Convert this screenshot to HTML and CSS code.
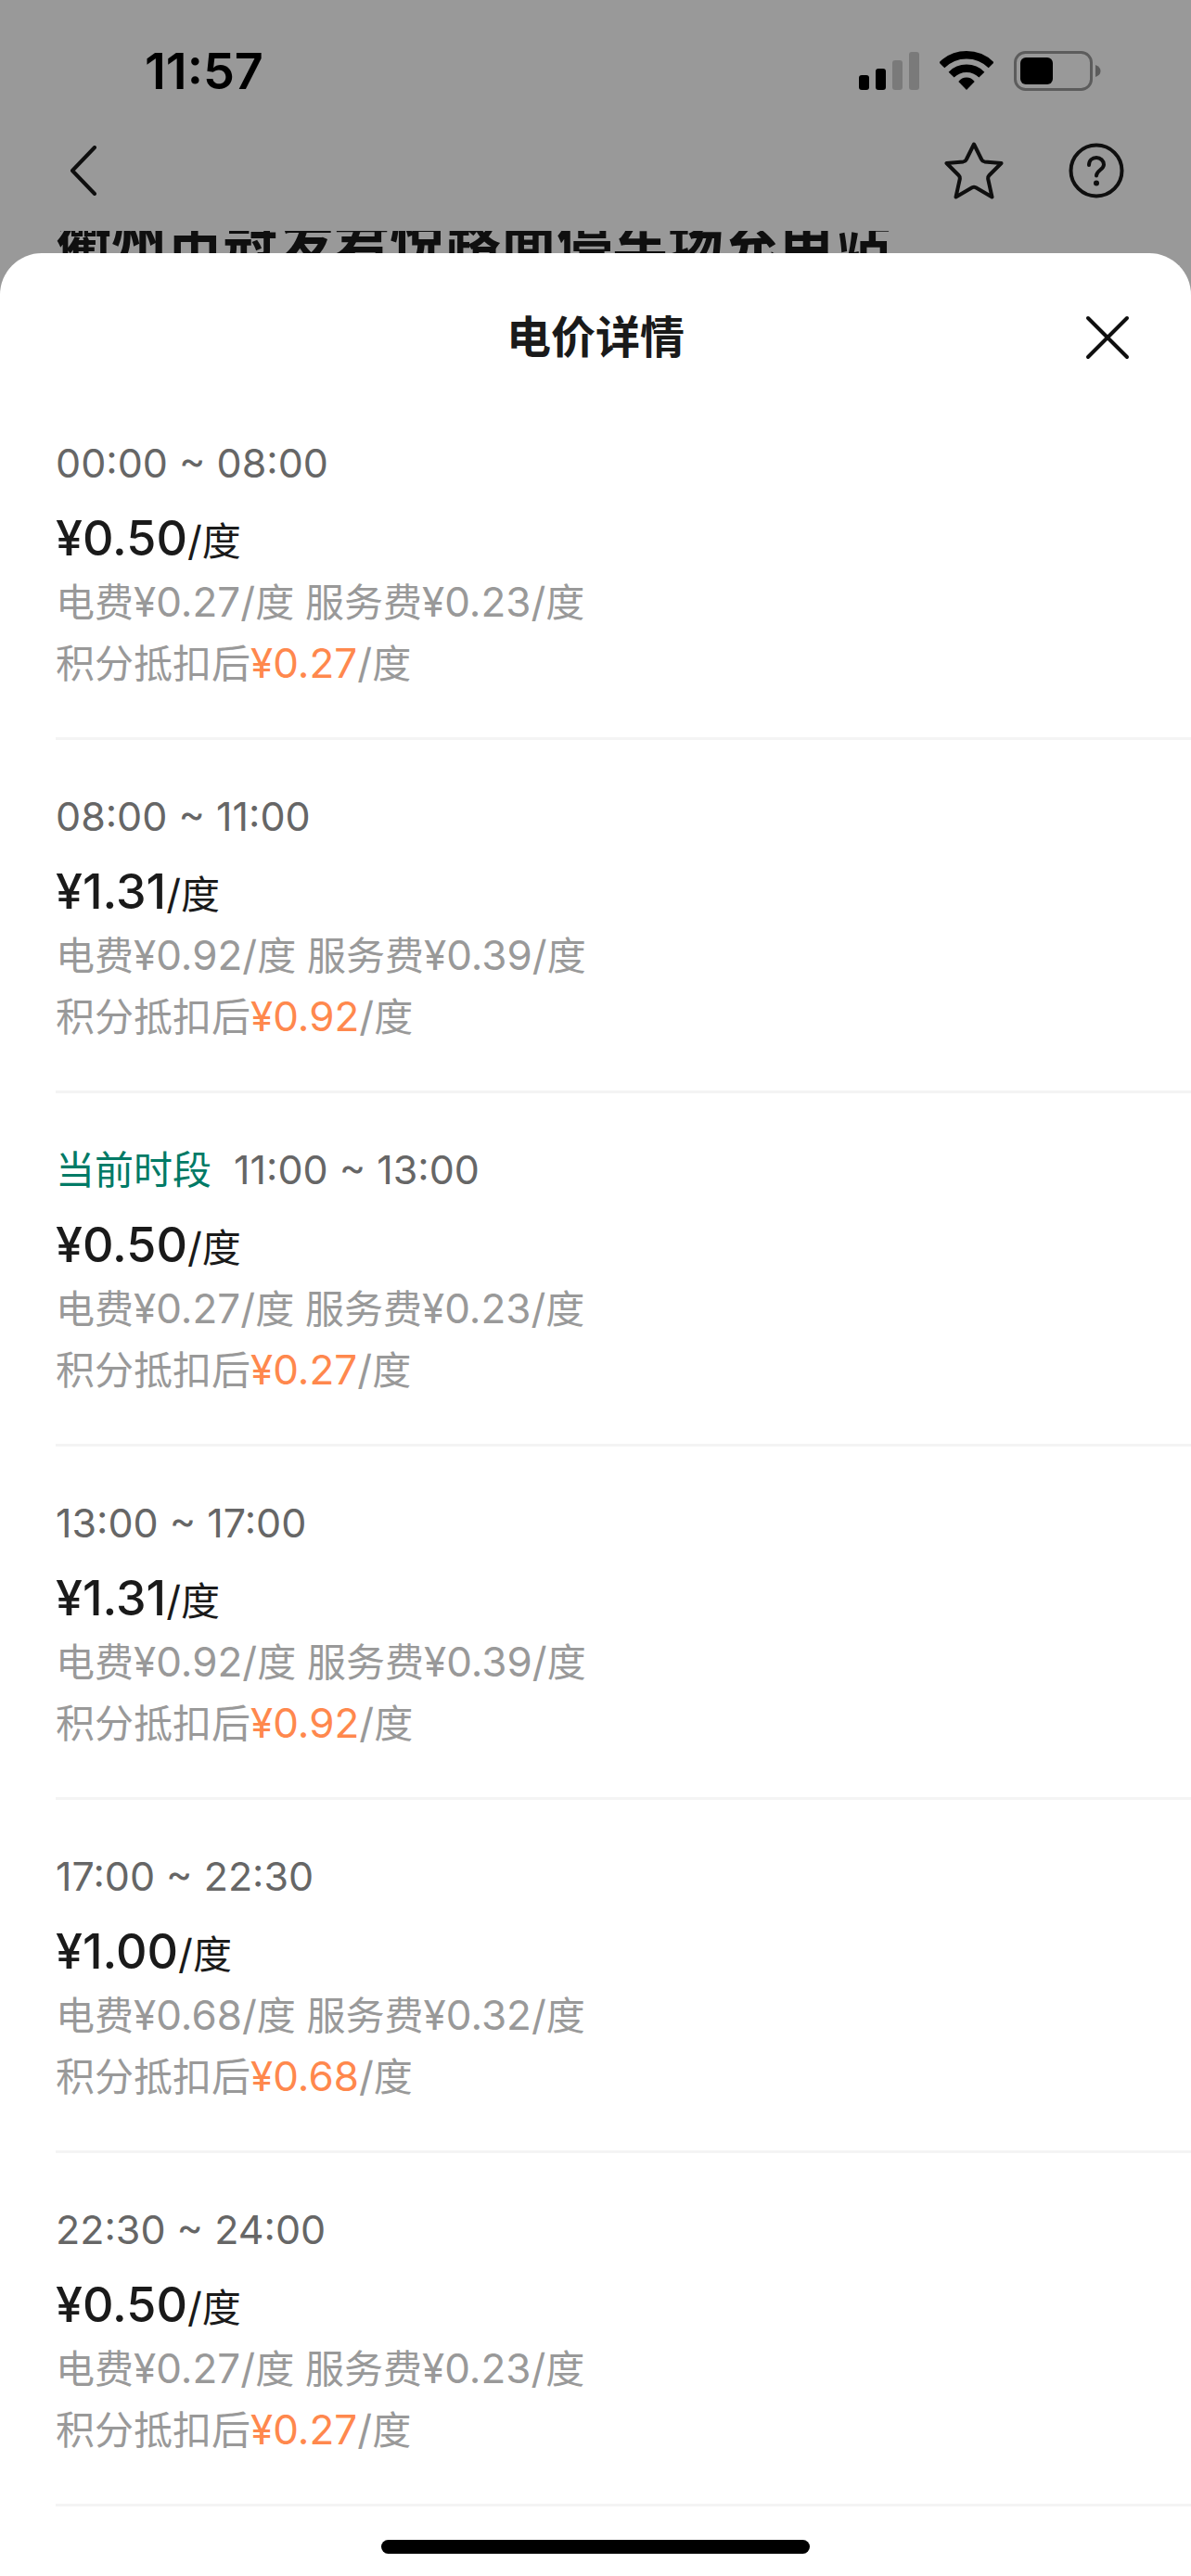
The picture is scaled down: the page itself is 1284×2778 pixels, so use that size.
FILE: index.html
```html
<!DOCTYPE html>
<html lang="zh-CN">
<head>
    <meta charset="UTF-8">
    <meta name="viewport" content="width=device-width, initial-scale=1.0">
    <title>电价详情</title>
    <link rel="stylesheet" href="styles.css">
</head>
<body>
    <div class="status-bar">
        <span class="clock">11:57</span>
        <div class="status-icons">
            <svg width="65" height="42" viewBox="0 0 65 42">
                <rect x="0" y="26" width="11" height="16" rx="3"/>
                <rect x="18" y="19" width="11" height="23" rx="3"/>
                <rect x="36" y="10" width="11" height="32" rx="3" fill="#7a7a7a"/>
                <rect x="54" y="1" width="11" height="41" rx="3" fill="#7a7a7a"/>
            </svg>
            <svg width="58" height="42" viewBox="0 0 58 42">
                <path d="M2.3 15.3A37.8 37.8 0 0 1 55.7 15.3" fill="none" stroke="#000" stroke-width="8.4"/>
                <path d="M12.6 25.6A23.2 23.2 0 0 1 45.4 25.6" fill="none" stroke="#000" stroke-width="8.4"/>
                <path d="M29 42L20.3 33Q24 28.6 29 28.6T37.7 33Z"/>
            </svg>
            <svg width="94" height="43" viewBox="0 0 94 43">
                <rect x="1.5" y="1.5" width="82" height="40" rx="11" fill="none" stroke="#5c5c5c" stroke-width="3"/>
                <rect x="7" y="7" width="35" height="29" rx="6"/>
                <path d="M88 15Q93.500 17 93.500 21.500T88 28Z" fill="#5c5c5c"/>
            </svg>
        </div>
    </div>

    <div class="nav-bar">
        <button type="button" class="icon-button" aria-label="返回">
            <svg width="30" height="54" viewBox="0 0 30 54">
                <path d="M27 2L3 27L27 52"/>
            </svg>
        </button>
        <div class="nav-actions">
            <button type="button" class="icon-button" aria-label="收藏">
                <svg width="64" height="62" viewBox="0 0 64 62">
                    <path d="M32 2.500L40.200 19Q41 21 43.500 21.400L61.500 23L48.500 36Q47 37.500 47.200 40L51.500 59.500L34 49.300Q32 48.300 30 49.300L12.500 59.500L16.800 40Q17 37.500 15.500 36L2.500 23L20.500 21.400Q23 21 23.800 19Z"/>
                </svg>
            </button>
            <button type="button" class="icon-button" aria-label="帮助">
                <svg width="60" height="60" viewBox="0 0 60 60">
                    <circle cx="30" cy="30" r="27.500"/>
                    <path d="M22 24C22 19 25.500 16 30 16S38 19.500 38 23.500C38 29 30 29.500 30 35.500"/>
                    <circle class="dot" cx="30" cy="43.500" r="3"/>
                </svg>
            </button>
        </div>
    </div>

    <!-- Station name, scrolled under the nav bar -->
    <div class="station-name">衢州市冠发君悦路面停车场充电站</div>

    <main class="sheet">
        <header class="sheet-header">
            <h1>电价详情</h1>
            <button type="button" class="icon-button close-button" aria-label="关闭">
                <svg width="48" height="48" viewBox="0 0 48 48">
                    <path d="M3 3L45 45M45 3L3 45"/>
                </svg>
            </button>
        </header>

        <ul class="price-list">
            <li class="price-item">
                <div class="period">00:00 ~ 08:00</div>
                <div class="price"><strong>¥0.50</strong><span class="num">/</span>度</div>
                <div class="detail">电费<span class="num">¥0.27/</span>度 服务费<span class="num">¥0.23/</span>度</div>
                <div class="detail">积分抵扣后<span class="num discount">¥0.27</span><span class="num">/</span>度</div>
            </li>
            <li class="price-item">
                <div class="period">08:00 ~ 11:00</div>
                <div class="price"><strong>¥1.31</strong><span class="num">/</span>度</div>
                <div class="detail">电费<span class="num">¥0.92/</span>度 服务费<span class="num">¥0.39/</span>度</div>
                <div class="detail">积分抵扣后<span class="num discount">¥0.92</span><span class="num">/</span>度</div>
            </li>
            <li class="price-item">
                <div class="period"><span class="current">当前时段</span>11:00 ~ 13:00</div>
                <div class="price"><strong>¥0.50</strong><span class="num">/</span>度</div>
                <div class="detail">电费<span class="num">¥0.27/</span>度 服务费<span class="num">¥0.23/</span>度</div>
                <div class="detail">积分抵扣后<span class="num discount">¥0.27</span><span class="num">/</span>度</div>
            </li>
            <li class="price-item">
                <div class="period">13:00 ~ 17:00</div>
                <div class="price"><strong>¥1.31</strong><span class="num">/</span>度</div>
                <div class="detail">电费<span class="num">¥0.92/</span>度 服务费<span class="num">¥0.39/</span>度</div>
                <div class="detail">积分抵扣后<span class="num discount">¥0.92</span><span class="num">/</span>度</div>
            </li>
            <li class="price-item">
                <div class="period">17:00 ~ 22:30</div>
                <div class="price"><strong>¥1.00</strong><span class="num">/</span>度</div>
                <div class="detail">电费<span class="num">¥0.68/</span>度 服务费<span class="num">¥0.32/</span>度</div>
                <div class="detail">积分抵扣后<span class="num discount">¥0.68</span><span class="num">/</span>度</div>
            </li>
            <li class="price-item">
                <div class="period">22:30 ~ 24:00</div>
                <div class="price"><strong>¥0.50</strong><span class="num">/</span>度</div>
                <div class="detail">电费<span class="num">¥0.27/</span>度 服务费<span class="num">¥0.23/</span>度</div>
                <div class="detail">积分抵扣后<span class="num discount">¥0.27</span><span class="num">/</span>度</div>
            </li>
        </ul>

        <div class="home-indicator"></div>
    </main>
</body>
</html>
```
FILE: styles.css
```css
/* General styles */
* {
    box-sizing: border-box;
}

body {
    margin: 0;
    min-height: 100vh;
    display: flex;
    flex-direction: column;
    font-family: Inter, "Noto Sans CJK SC", sans-serif;
    background-color: #999999;
    color: #1a1a1a;
}

/* Status bar */
.status-bar {
    display: flex;
    justify-content: space-between;
    align-items: center;
    height: 126px;
    padding: 26px 97px 0 156px;
}

.clock {
    font-size: 54px;
    font-weight: 600;
    color: #000000;
}

.status-icons {
    display: flex;
    align-items: center;
    gap: 22px;
}

/* Nav bar */
.nav-bar {
    display: flex;
    justify-content: space-between;
    align-items: center;
    height: 123px;
    padding: 0 72px 8px 75px;
}

.nav-actions {
    display: flex;
    align-items: center;
    gap: 70px;
}

.icon-button {
    display: flex;
    padding: 0;
    border: none;
    background: none;
    cursor: pointer;
}

.icon-button svg {
    fill: none;
    stroke: #0f0f0f;
    stroke-width: 4;
    stroke-linecap: round;
    stroke-linejoin: round;
}

.icon-button .dot {
    fill: #0f0f0f;
    stroke: none;
}

.station-name {
    height: 24px;
    padding-left: 60px;
    overflow: hidden;
    white-space: nowrap;
    font-size: 60px;
    font-weight: 700;
    line-height: 24px;
    color: #0f0f0f;
}

/* Bottom sheet */
.sheet {
    flex: 1;
    display: flex;
    flex-direction: column;
    background-color: #ffffff;
    border-radius: 45px 45px 0 0;
}

.sheet-header {
    display: grid;
    grid-template-columns: 1fr auto 1fr;
    align-items: center;
    height: 144px;
    padding: 38px 66px 0;
}

.sheet-header h1 {
    grid-column: 2;
    margin: 0;
    font-size: 48px;
    font-weight: 600;
    line-height: 60px;
}

.close-button {
    justify-self: end;
}

/* Price list */
.price-list {
    margin: 0;
    padding: 0 0 0 60px;
    list-style: none;
}

.price-item {
    padding: 52px 0 46px;
    border-bottom: 3px solid #f4f4f4;
    font-size: 42px;
}

.num {
    font-size: 44px;
    line-height: 1;
}

.period {
    margin-bottom: 22px;
    font-size: 43px;
    line-height: 60px;
    color: #666666;
}

.current {
    margin-right: 24px;
    font-size: 42px;
    line-height: 1;
    color: #007a66;
}

.price {
    line-height: 66px;
}

.price strong {
    font-size: 52px;
    font-weight: 500;
    line-height: 1;
}

.detail {
    line-height: 66px;
    color: #999999;
}

.discount {
    color: #ff884d;
}

.home-indicator {
    width: 36%;
    height: 15px;
    margin: auto auto 24px;
    border-radius: 8px;
    background-color: #000000;
}
```
